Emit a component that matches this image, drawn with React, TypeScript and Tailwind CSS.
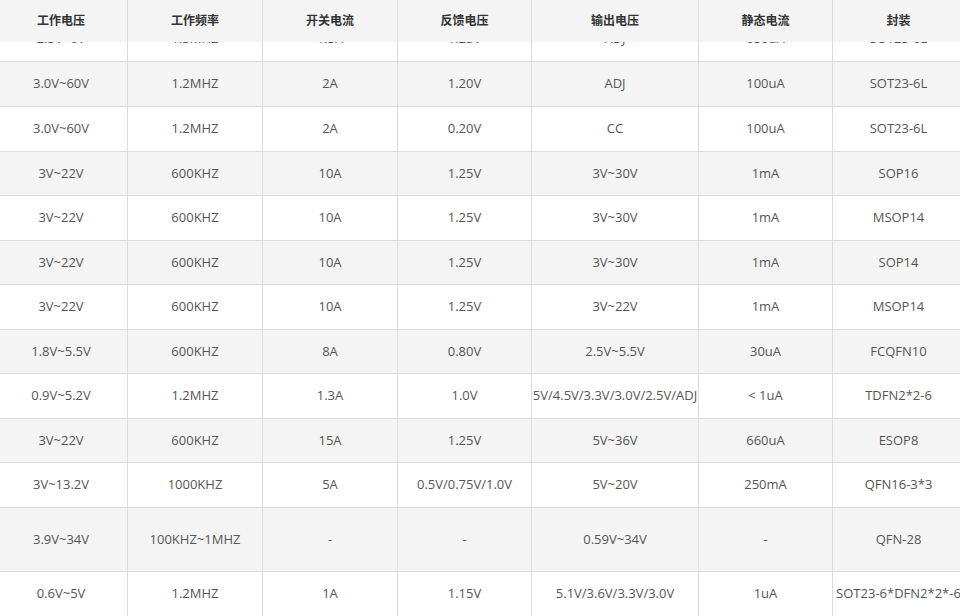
const columns = ['工作电压', '工作频率', '开关电流', '反馈电压', '输出电压', '静态电流', '封装']

const partialRow = ['2.5V~6V', '1.5MHZ', '1.5A', '1.25V', 'ADJ', '650uA', 'SOT23-6L']

// [cells, row height incl. bottom border]
const rows: [string[], number][] = [
  [['3.0V~60V', '1.2MHZ', '2A', '1.20V', 'ADJ', '100uA', 'SOT23-6L'], 45],
  [['3.0V~60V', '1.2MHZ', '2A', '0.20V', 'CC', '100uA', 'SOT23-6L'], 45],
  [['3V~22V', '600KHZ', '10A', '1.25V', '3V~30V', '1mA', 'SOP16'], 44],
  [['3V~22V', '600KHZ', '10A', '1.25V', '3V~30V', '1mA', 'MSOP14'], 45],
  [['3V~22V', '600KHZ', '10A', '1.25V', '3V~30V', '1mA', 'SOP14'], 44],
  [['3V~22V', '600KHZ', '10A', '1.25V', '3V~22V', '1mA', 'MSOP14'], 45],
  [['1.8V~5.5V', '600KHZ', '8A', '0.80V', '2.5V~5.5V', '30uA', 'FCQFN10'], 44],
  [['0.9V~5.2V', '1.2MHZ', '1.3A', '1.0V', '5V/4.5V/3.3V/3.0V/2.5V/ADJ', '< 1uA', 'TDFN2*2-6'], 45],
  [['3V~22V', '600KHZ', '15A', '1.25V', '5V~36V', '660uA', 'ESOP8'], 44],
  [['3V~13.2V', '1000KHZ', '5A', '0.5V/0.75V/1.0V', '5V~20V', '250mA', 'QFN16-3*3'], 45],
  [['3.9V~34V', '100KHZ~1MHZ', '-', '-', '0.59V~34V', '-', 'QFN-28'], 64],
  [['0.6V~5V', '1.2MHZ', '1A', '1.15V', '5.1V/3.6V/3.3V/3.0V', '1uA', 'SOT23-6*DFN2*2*-6'], 45],
]

const grid = 'grid grid-cols-[133px_135px_135px_134px_167px_134px_132px]'

export default function App() {
  return (
    <div
      className="h-[616px] w-[960px] overflow-hidden bg-white text-[13px] text-[#555]"
      style={{ fontFamily: '"Open Sans", "Noto Sans CJK SC", sans-serif' }}
    >
      <div className="-ml-[5px] w-[970px]">
        {/* Header */}
        <div className={`${grid} h-[42px] bg-[#f4f4f4]`}>
          {columns.map((c) => (
            <div
              key={c}
              className="flex items-center justify-center border-r border-[#dcdcdc] text-[12px] font-bold text-[#333]"
            >
              {c}
            </div>
          ))}
        </div>

        {/* Row scrolled under the header */}
        <div className={`${grid} h-[20px] border-b border-[#dcdcdc] bg-white`}>
          {partialRow.map((v, i) => (
            <div key={i} className="overflow-hidden border-r border-[#dcdcdc]">
              <div className="-mt-[25px] flex h-[44px] items-center justify-center whitespace-nowrap">{v}</div>
            </div>
          ))}
        </div>

        {/* Body */}
        {rows.map(([cells, h], r) => (
          <div
            key={r}
            className={`${grid} border-b border-[#dcdcdc] ${r % 2 === 0 ? 'bg-[#f4f4f4]' : 'bg-white'}`}
            style={{ height: h }}
          >
            {cells.map((v, i) => (
              <div
                key={i}
                className="flex items-center justify-center overflow-hidden whitespace-nowrap border-r border-[#dcdcdc]"
              >
                {v}
              </div>
            ))}
          </div>
        ))}
      </div>
    </div>
  )
}
